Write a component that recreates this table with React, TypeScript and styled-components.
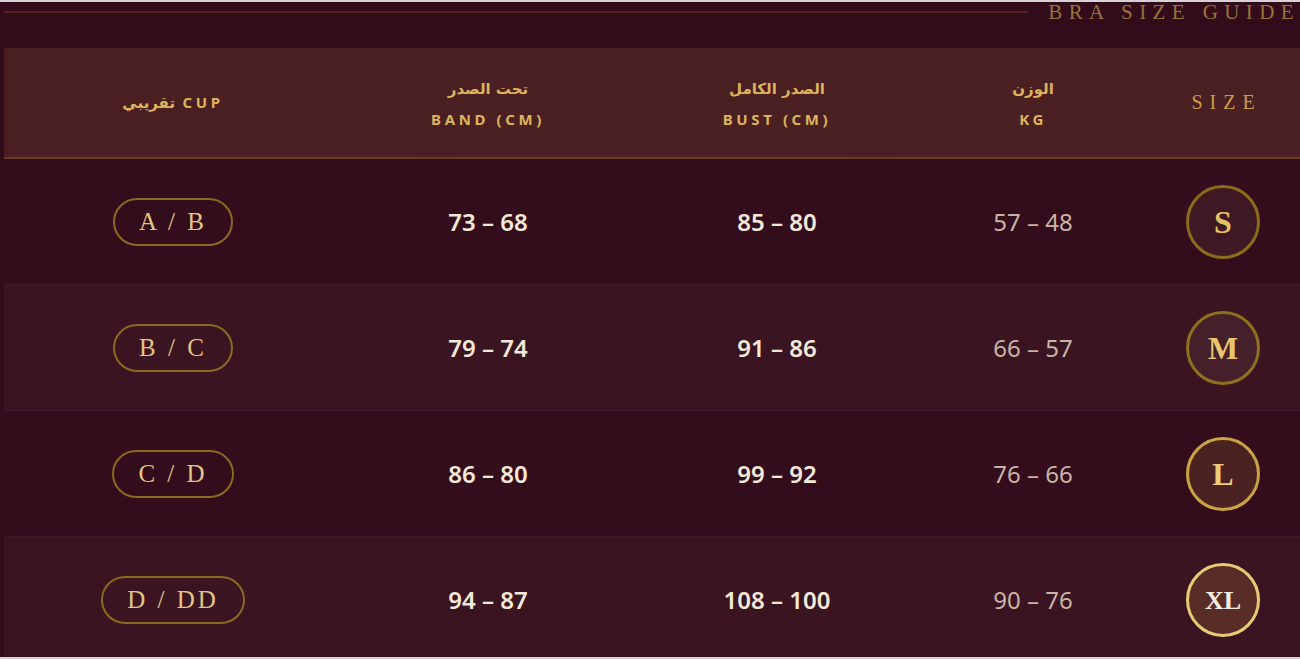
import styled, { createGlobalStyle } from "styled-components";

const GlobalStyle = createGlobalStyle`
  * { box-sizing: border-box; }
  html, body { margin: 0; padding: 0; background: #310b19; }
  body {
    font-family: "Noto Sans", "DejaVu Sans", sans-serif;
    overflow: hidden;
  }
`;

const Page = styled.div`
  width: 1300px;
  height: 659px;
  overflow: hidden;
  background: #320c1a;
  border-top: 2px solid #d6d3d4;
  border-bottom: 2px solid #d6d3d4;
  padding-left: 4px;
  display: flex;
  flex-direction: column;
`;

const TitleBar = styled.div`
  height: 46px;
  flex-shrink: 0;
  display: flex;
  align-items: flex-start;
  gap: 20px;
`;

const TitleLine = styled.div`
  flex: 1;
  height: 2px;
  margin-top: 9px;
  background: #55241f;
`;

const Title = styled.h1`
  margin: 0;
  font-family: "Liberation Serif", "DejaVu Serif", serif;
  font-weight: 400;
  font-size: 21px;
  line-height: 20px;
  letter-spacing: 6.4px;
  color: #97733b;
  white-space: nowrap;
`;

const columns = "338px 292px 286px 226px 1fr";

const HeaderRow = styled.div`
  display: grid;
  flex-shrink: 0;
  grid-template-columns: ${columns};
  height: 111px;
  background: linear-gradient(90deg, #4a1f22 0%, #4b2022 50%, #4a1f21 100%);
  border-bottom: 2px solid #6c3a25;
`;

const HeaderCell = styled.div`
  display: flex;
  flex-direction: column;
  align-items: center;
  justify-content: center;
  gap: 8px;
  color: #dcb45c;
  font-weight: 700;
`;

const ArabicLabel = styled.div`
  font-family: "DejaVu Sans", "Noto Sans", sans-serif;
  font-size: 15px;
  line-height: 24px;
  font-weight: 700;
`;

const LatinLabel = styled.div`
  font-size: 15px;
  line-height: 20px;
  letter-spacing: 3.6px;
  font-weight: 700;
`;

const SizeLabel = styled.div`
  font-family: "Liberation Serif", "DejaVu Serif", serif;
  font-size: 20px;
  letter-spacing: 7px;
  font-weight: 400;
  color: #c79c48;
  margin-right: -7px;
`;

const Row = styled.div<{ $alt: boolean }>`
  display: grid;
  grid-template-columns: ${columns};
  height: 126px;
  flex-shrink: 0;
  background: ${(p) => (p.$alt ? "#3a1420" : "#330d1b")};
  border-bottom: 1px solid #43182a;
`;

const Cell = styled.div`
  display: flex;
  align-items: center;
  justify-content: center;
`;

const Value = styled.span<{ $muted?: boolean }>`
  font-size: 24px;
  font-weight: ${(p) => (p.$muted ? 400 : 600)};
  color: ${(p) => (p.$muted ? "#c8b4a6" : "#f4e8d8")};
`;

const CupPill = styled.div`
  height: 48px;
  padding: 0 24px;
  border: 2px solid #8a6a1f;
  border-radius: 24px;
  display: flex;
  align-items: center;
  font-family: "Liberation Serif", "DejaVu Serif", serif;
  font-size: 25px;
  letter-spacing: 3px;
  color: #e2c585;
`;

const tiers = [
  { bg: "#3e1822", border: "#8a6b1c", color: "#e6c266", size: 32 },
  { bg: "#45202a", border: "#8f701f", color: "#e8c66d", size: 32 },
  { bg: "#4a2222", border: "#caa443", color: "#ebcd78", size: 32 },
  { bg: "#582d27", border: "#e7cc76", color: "#f3ebe2", size: 26 },
];

const SizeBadge = styled.div<{ $tier: number }>`
  width: 74px;
  height: 74px;
  border-radius: 50%;
  border: 3px solid ${(p) => tiers[p.$tier].border};
  background: ${(p) => tiers[p.$tier].bg};
  color: ${(p) => tiers[p.$tier].color};
  display: flex;
  align-items: center;
  justify-content: center;
  font-family: "Liberation Serif", "DejaVu Serif", serif;
  font-weight: 700;
  font-size: ${(p) => tiers[p.$tier].size}px;
  padding-top: 2px;
`;

const rows = [
  { size: "S", kg: "57 – 48", bust: "85 – 80", band: "73 – 68", cup: "A / B" },
  { size: "M", kg: "66 – 57", bust: "91 – 86", band: "79 – 74", cup: "B / C" },
  { size: "L", kg: "76 – 66", bust: "99 – 92", band: "86 – 80", cup: "C / D" },
  { size: "XL", kg: "90 – 76", bust: "108 – 100", band: "94 – 87", cup: "D / DD" },
];

export default function App() {
  return (
    <>
      <GlobalStyle />
      <Page>
        <TitleBar>
          <TitleLine />
          <Title>BRA SIZE GUIDE</Title>
        </TitleBar>
        <HeaderRow>
          <HeaderCell>
            <LatinLabel style={{ direction: "rtl" }}>
              CUP <ArabicLabel as="span">تقريبي</ArabicLabel>
            </LatinLabel>
          </HeaderCell>
          <HeaderCell>
            <ArabicLabel>تحت الصدر</ArabicLabel>
            <LatinLabel>BAND (CM)</LatinLabel>
          </HeaderCell>
          <HeaderCell>
            <ArabicLabel>الصدر الكامل</ArabicLabel>
            <LatinLabel>BUST (CM)</LatinLabel>
          </HeaderCell>
          <HeaderCell>
            <ArabicLabel>الوزن</ArabicLabel>
            <LatinLabel>KG</LatinLabel>
          </HeaderCell>
          <HeaderCell>
            <SizeLabel>SIZE</SizeLabel>
          </HeaderCell>
        </HeaderRow>
        {rows.map((r, i) => (
          <Row key={r.size} $alt={i % 2 === 1}>
            <Cell>
              <CupPill>{r.cup}</CupPill>
            </Cell>
            <Cell>
              <Value>{r.band}</Value>
            </Cell>
            <Cell>
              <Value>{r.bust}</Value>
            </Cell>
            <Cell>
              <Value $muted>{r.kg}</Value>
            </Cell>
            <Cell>
              <SizeBadge $tier={i}>{r.size}</SizeBadge>
            </Cell>
          </Row>
        ))}
      </Page>
    </>
  );
}
